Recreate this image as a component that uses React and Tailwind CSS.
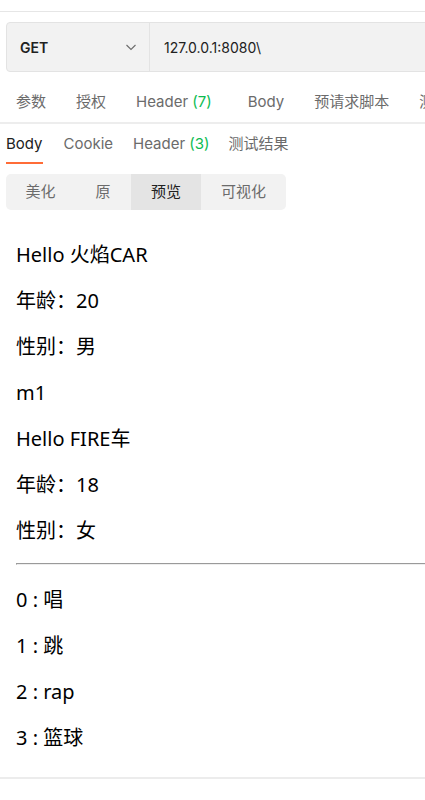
import React from "react";

const ui = { fontFamily: 'Inter, "Noto Sans CJK SC", sans-serif' };
const body = { fontFamily: '"Noto Sans", "Noto Sans CJK SC", sans-serif' };

function Chevron() {
  return (
    <svg width="12" height="12" viewBox="0 0 12 12" fill="none">
      <path d="M1.5 4l4.5 4.5L10.5 4" stroke="#6b6b6b" strokeWidth="1.1" />
    </svg>
  );
}

export default function App() {
  const lines1 = ["Hello 火焰CAR", "年龄：20", "性别：男", "m1", "Hello FIRE车", "年龄：18", "性别：女"];
  const lines2 = ["0 : 唱", "1 : 跳", "2 : rap", "3 : 篮球"];
  return (
    <div className="w-[425px] h-[800px] overflow-hidden bg-white" style={ui}>
      <div className="h-[12px] border-b border-[#e6e6e6]" />
      <div className="mt-[10px] ml-[6px] w-[480px] h-[50px] flex rounded-[4px] border border-[#e3e3e3] bg-[#f2f2f2]">
        <div className="w-[143px] flex items-center justify-between pl-[13px] pr-[12px] border-r border-[#e3e3e3]">
          <span className="text-[14px] font-semibold text-[#212121]">GET</span>
          <Chevron />
        </div>
        <div className="flex items-center pl-[14px] text-[14px] text-[#212121]">127.0.0.1:8080\</div>
      </div>
      <div className="mt-[8px] h-[44px] flex items-center pt-[2px] border-b-2 border-[#ededed] text-[15px] text-[#6b6b6b] whitespace-nowrap">
        <span className="ml-[16px]">参数</span>
        <span className="ml-[30px]">授权</span>
        <span className="ml-[30px]">Header <span className="text-[#0cbb52]">(7)</span></span>
        <span className="ml-[36px]">Body</span>
        <span className="ml-[30px]">预请求脚本</span>
        <span className="ml-[30px]">测试</span>
      </div>
      <div className="flex items-start h-[40px] text-[15px] text-[#6b6b6b] whitespace-nowrap">
        <span className="ml-[6px] h-[40px] pt-[2px] flex items-center border-b-2 border-[#ff6c37] text-[#212121]">Body</span>
        <span className="ml-[21px] h-[40px] pt-[2px] flex items-center border-b-2 border-transparent">Cookie</span>
        <span className="ml-[20px] h-[40px] pt-[2px] flex items-center border-b-2 border-transparent">Header&nbsp;<span className="text-[#0cbb52]">(3)</span></span>
        <span className="ml-[19px] h-[40px] pt-[2px] flex items-center border-b-2 border-transparent">测试结果</span>
      </div>
      <div className="mt-[10px] ml-[6px] w-[280px] h-[36px] flex rounded-[5px] bg-[#f2f2f2] overflow-hidden text-[15px] text-[#6b6b6b]">
        <div className="w-[69px] flex items-center justify-center">美化</div>
        <div className="w-[56px] flex items-center justify-center">原</div>
        <div className="w-[70px] flex items-center justify-center bg-[#e4e4e4] text-[#212121]">预览</div>
        <div className="w-[85px] flex items-center justify-center">可视化</div>
      </div>
      <div className="pl-[16px] pt-[31px] text-[20px] leading-[28px] text-black" style={body}>
        {lines1.map((t, i) => (
          <div key={i} className={i < lines1.length - 1 ? "mb-[18px]" : ""}>{t}</div>
        ))}
        <div className="mt-[18px] h-[2px] border-t border-l border-[#9a9a9a] border-b border-b-[#eeeeee]" />
        <div className="pt-[21px]">
          {lines2.map((t, i) => (
            <div key={i} className={i < lines2.length - 1 ? "mb-[18px]" : ""}>{t}</div>
          ))}
        </div>
      </div>
      <div className="mt-[25px] h-[2px] bg-[#ececec]" />
    </div>
  );
}
